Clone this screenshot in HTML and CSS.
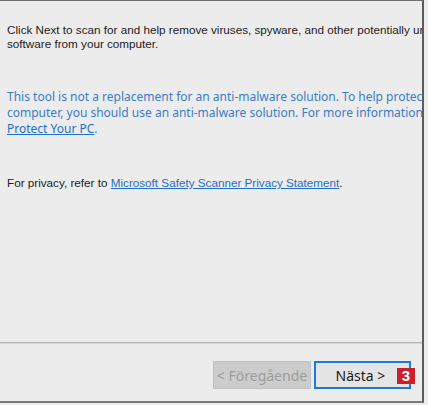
FILE: index.html
```html
<!DOCTYPE html>
<html>
<head>
<meta charset="utf-8">
<link rel="stylesheet" href="styles.css">
</head>
<body>
<div class="window">
  <div class="content">
    <p class="intro">Click Next to scan for and help remove viruses, spyware, and other potentially unwanted<br>software from your computer.</p>
    <p class="note">This tool is not a replacement for an anti-malware solution. To help protect your<br>computer, you should use an anti-malware solution. For more information, see<br><a class="link">Protect Your PC</a>.</p>
    <p class="privacy">For privacy, refer to <a class="link">Microsoft Safety Scanner Privacy Statement</a>.</p>
  </div>
  <div class="separator"></div>
  <div class="buttons">
    <div class="btn btn-disabled">&lt; Föregående</div>
    <div class="btn btn-next">Nästa &gt;<span class="badge">3</span></div>
  </div>
</div>
</body>
</html>
```
FILE: styles.css
```css
html, body {
  margin: 0;
  padding: 0;
  background: #ededed;
  width: 428px;
  height: 405px;
  overflow: hidden;
}
.window {
  width: 424px;
  height: 403px;
  border-top: 1px solid #6e6e6e;
  border-right: 2px solid #5c5c5c;
  border-bottom: 2px solid #7a7a7a;
  background: #ececec;
  box-sizing: border-box;
  display: flex;
  flex-direction: column;
  overflow: hidden;
}
.content {
  height: 341px;
  padding: 22px 0 0 7px;
  box-sizing: border-box;
  overflow: hidden;
}
p {
  margin: 0;
  white-space: nowrap;
}
.intro, .privacy {
  font-family: "Liberation Sans", Arial, sans-serif;
  font-size: 11.7px;
  line-height: 14px;
  color: #1c1c1c;
}
.note {
  margin-top: 38px;
  font-family: "Noto Sans", "Open Sans", sans-serif;
  font-size: 12px;
  line-height: 16px;
  color: #3a7cc6;
}
.privacy {
  margin-top: 39px;
}
.link {
  color: #1f6fc4;
  text-decoration: underline;
}
.separator {
  height: 1px;
  border-top: 1px solid #b3b3b3;
  background: #d4d4d4;
}
.buttons {
  flex: 1;
  display: flex;
  justify-content: flex-end;
  align-items: flex-start;
  gap: 3px;
  padding: 17px 11px 0 0;
}
.btn {
  height: 28px;
  box-sizing: border-box;
  display: flex;
  align-items: center;
  justify-content: center;
  font-family: "Noto Sans", "Open Sans", sans-serif;
  font-size: 14px;
  position: relative;
}
.btn-disabled {
  width: 98px;
  background: #cccccc;
  border: 1px solid #c2c2c2;
  color: #9c9c9c;
}
.btn-next {
  width: 97px;
  background: #e5e5e5;
  border: 2px solid #1f7ad6;
  color: #1a1a1a;
  padding-right: 4px;
}
.badge {
  position: absolute;
  left: 81px;
  top: 5px;
  width: 18px;
  height: 16px;
  background: #c8202d;
  color: #ffffff;
  font-family: "Liberation Sans", Arial, sans-serif;
  font-weight: bold;
  font-size: 15px;
  line-height: 16px;
  text-align: center;
}
```
